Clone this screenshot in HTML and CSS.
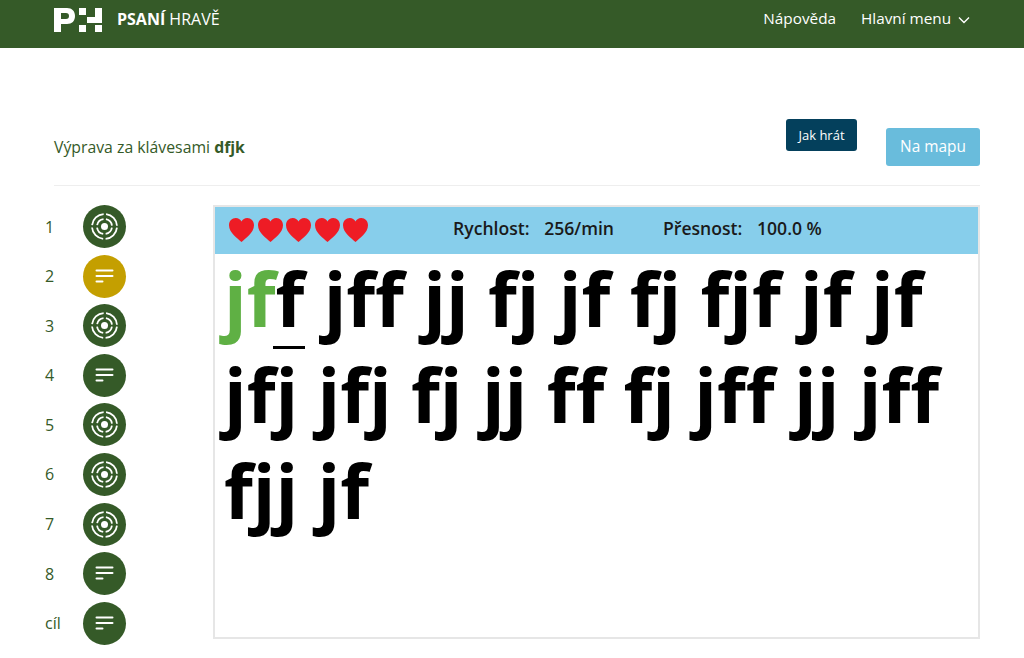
FILE: index.html
```html
<!DOCTYPE html>
<html lang="cs">
<head>
    <meta charset="UTF-8">
    <title>Psaní hravě</title>
    <link rel="stylesheet" href="styles.css">
</head>
<body>
    <svg class="defs" width="0" height="0">
        <symbol id="ico-target" viewBox="0 0 43 43">
            <circle cx="21.500" cy="21.500" r="3.500" fill="#fff"/>
            <g fill="none" stroke="#fff" stroke-width="1.800">
                <circle cx="21.500" cy="21.500" r="7.500" stroke-dasharray="9.280 2.500" stroke-dashoffset="-1.250"/>
                <circle cx="21.500" cy="21.500" r="12.500" stroke-dasharray="17.130 2.500" stroke-dashoffset="-1.250"/>
            </g>
        </symbol>
        <symbol id="ico-lines" viewBox="0 0 43 43">
            <g fill="#fff">
                <rect x="12.500" y="14.500" width="18" height="2" rx="1"/>
                <rect x="12.500" y="20" width="18" height="2" rx="1"/>
                <rect x="12.500" y="25.500" width="8" height="2" rx="1"/>
            </g>
        </symbol>
        <symbol id="ico-heart" viewBox="0 0 25 24">
            <path d="M12.500 24C9 20.500 0 15 0 7.200 0 3 3 0 6.800 0c2.500 0 4.500 1.300 5.700 3.400C13.700 1.300 15.700 0 18.200 0 22 0 25 3 25 7.200 25 15 16 20.500 12.500 24z"/>
        </symbol>
    </svg>

    <header class="top">
        <a class="brand">
            <svg class="logo" viewBox="0 0 48 25" width="48" height="25">
                <path fill="#fff" d="M0 1h13c5 0 8 3 8 8s-3 8-8 8H7v8H0zM7 6v6h5c2 0 3-1 3-3s-1-3-3-3z"/>
                <rect fill="#fff" x="25" y="1" width="7" height="7"/>
                <rect fill="#fff" x="25" y="18" width="7" height="7"/>
                <rect fill="#fff" x="41" y="1" width="7" height="15"/>
                <rect fill="#fff" x="41" y="18" width="7" height="7"/>
                <rect fill="#fff" x="33" y="10" width="15" height="6"/>
            </svg>
            <span class="brand-name"><b>PSANÍ</b> HRAVĚ</span>
        </a>
        <nav class="nav">
            <a>Nápověda</a>
            <a>Hlavní menu
                <svg class="chev" viewBox="0 0 12 8" width="12" height="8"><path d="M1 1.500l5 5 5-5" fill="none" stroke="#fff" stroke-width="1.400"/></svg>
            </a>
        </nav>
    </header>

    <main class="wrap">
        <div class="head">
            <p class="trip">Výprava za klávesami <b>dfjk</b></p>
            <div class="btns">
                <a class="btn btn-dark">Jak hrát</a>
                <a class="btn btn-light">Na mapu</a>
            </div>
        </div>

        <div class="cols">
            <ul class="steps">
                <li><span>1</span><svg class="dot"><use href="#ico-target"/></svg></li>
                <li><span>2</span><svg class="dot now"><use href="#ico-lines"/></svg></li>
                <li><span>3</span><svg class="dot"><use href="#ico-target"/></svg></li>
                <li><span>4</span><svg class="dot"><use href="#ico-lines"/></svg></li>
                <li><span>5</span><svg class="dot"><use href="#ico-target"/></svg></li>
                <li><span>6</span><svg class="dot"><use href="#ico-target"/></svg></li>
                <li><span>7</span><svg class="dot"><use href="#ico-target"/></svg></li>
                <li><span>8</span><svg class="dot"><use href="#ico-lines"/></svg></li>
                <li><span>cíl</span><svg class="dot"><use href="#ico-lines"/></svg></li>
            </ul>

            <section class="game">
                <div class="bar">
                    <div class="hearts">
                        <svg class="heart"><use href="#ico-heart"/></svg>
                        <svg class="heart"><use href="#ico-heart"/></svg>
                        <svg class="heart"><use href="#ico-heart"/></svg>
                        <svg class="heart"><use href="#ico-heart"/></svg>
                        <svg class="heart"><use href="#ico-heart"/></svg>
                    </div>
                    <div class="stat stat-speed">Rychlost: <span>256/min</span></div>
                    <div class="stat">Přesnost: <span>100.0 %</span></div>
                </div>
                <div class="text"><span class="ok">jf</span><span class="cur">f</span> jff jj fj jf fj fjf jf jf jfj jfj fj jj ff fj jff jj jff fjj jf</div>
            </section>
        </div>
    </main>
</body>
</html>
```

FILE: styles.css
```css
*{box-sizing: border-box;}
html,body{margin: 0;padding: 0;}
body{
    font-family: "Open Sans", sans-serif;font-size: 16px;
    background: #fff;color: #000;height: 658px;overflow: hidden;
}
.defs{position: absolute;}

.top{
    height: 48px;background: #355a28;color: #fff;
    display: flex;justify-content: space-between;align-items: flex-start;
    padding: 6px 54px 0 54px;
}
.brand{display: flex;align-items: center;gap: 15px;}
.brand-name{font-size: 16px;line-height: 27px;}
.nav{display: flex;gap: 25px;font-size: 15.300px;line-height: 25px;}
.chev{margin-left: 3px;}

.wrap{padding: 0 44px 0 54px;}
.head{
    height: 138px;padding-bottom: 19px;
    border-bottom: 1px solid #eee;
    display: flex;justify-content: space-between;align-items: flex-end;
}
.trip{margin: 0;font-size: 15.800px;line-height: 20px;color: #355a28;padding-bottom: 9px;}
.btns{display: flex;gap: 29px;align-items: flex-start;}
.btn{color: #fff;border-radius: 3px;text-align: center;}
.btn-dark{
    background: #04405c;font-size: 13px;line-height: 32px;
    height: 32px;width: 71px;margin-top: -9px;
}
.btn-light{
    background: #69bcdc;font-size: 15.400px;line-height: 38px;
    height: 38px;width: 94px;
}

.cols{display: flex;padding-top: 19px;}
.steps{
    list-style: none;margin: 0;padding: 0;width: 159px;
    display: flex;flex-direction: column;gap: 6.600px;
}
.steps li{display: flex;align-items: center;height: 43px;color: #355a28;font-size: 16px;}
.steps li span{width: 38px;margin-left: -9px;}
.dot{width: 43px;height: 43px;border-radius: 50%;background: #355a28;flex: none;}
.dot.now{background: #c49f00;}

.game{
    width: 767px;height: 434px;
    border: 2px solid #e6e6e6;
}
.bar{
    height: 47px;background: #87ceeb;
    display: flex;align-items: center;
    font-size: 17.600px;font-weight: 600;color: #1a1a1a;
    padding: 0 0 5px 14px;
}
.hearts{display: flex;gap: 3.600px;width: 224px;padding-top: 4px;}
.heart{width: 25px;height: 24px;fill: #ee1c25;flex: none;}
.stat{word-spacing: 10px;}
.stat span{word-spacing: normal;}
.stat-speed{width: 210px;}
.text{
    font-size: 74.400px;line-height: 96px;font-weight: 700;
    padding: 0 9px;
    margin-top: -4px;
}
.ok{color: #5fb044;}
.cur{position: relative;display: inline-block;line-height: 75px;}
.cur::after{
    content: "";position: absolute;left: -3px;right: -1px;bottom: -13px;
    height: 3.500px;background: #000;
}
```
